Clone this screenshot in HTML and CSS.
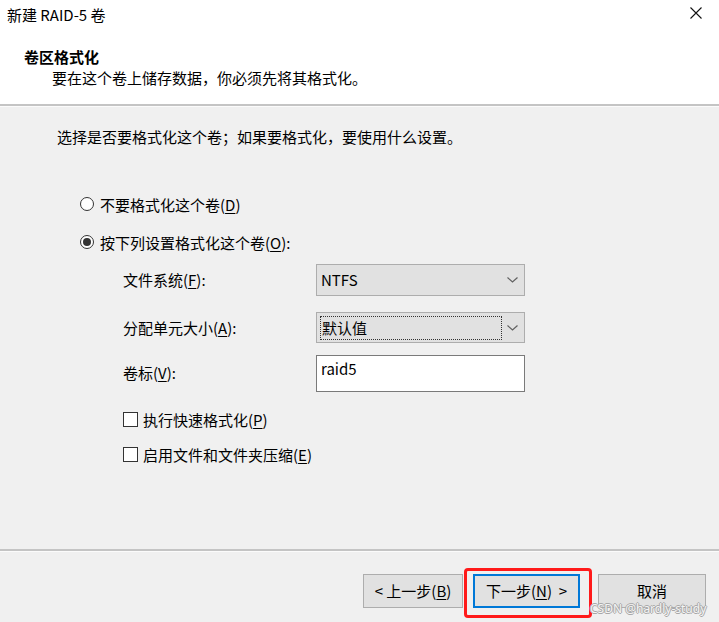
FILE: index.html
```html
<!DOCTYPE html>
<html lang="zh-CN">
<head>
<meta charset="utf-8">
<title>新建 RAID-5 卷</title>
<link rel="stylesheet" href="styles.css">
</head>
<body>
<div class="window">
  <div class="top">
    <div class="titlebar">
      <span class="title">新建 RAID-5 卷</span>
      <svg class="close" width="12" height="12" viewBox="0 0 12 12"><path d="M0.5 0.5 L11.5 11.5 M11.5 0.5 L0.5 11.5" stroke="#111" stroke-width="1.1" fill="none"/></svg>
    </div>
    <div class="header">
      <div class="h-title">卷区格式化</div>
      <div class="h-sub">要在这个卷上储存数据，你必须先将其格式化。</div>
    </div>
  </div>
  <div class="sep"></div>
  <div class="content">
    <div class="intro">选择是否要格式化这个卷；如果要格式化，要使用什么设置。</div>
    <div class="radio-row r1"><span class="radio"></span><span>不要格式化这个卷(<u>D</u>)</span></div>
    <div class="radio-row r2"><span class="radio checked"></span><span>按下列设置格式化这个卷(<u>O</u>):</span></div>
    <div class="form">
      <div class="frow f1">
        <span class="label">文件系统(<u>F</u>):</span>
        <div class="combo"><span class="ctext">NTFS</span><svg class="chev" width="11" height="6" viewBox="0 0 11 6"><path d="M0.5 0.5 L5.5 5 L10.5 0.5" stroke="#606060" stroke-width="1.2" fill="none"/></svg></div>
      </div>
      <div class="frow f2">
        <span class="label">分配单元大小(<u>A</u>):</span>
        <div class="combo"><span class="ctext focus">默认值</span><svg class="chev" width="11" height="6" viewBox="0 0 11 6"><path d="M0.5 0.5 L5.5 5 L10.5 0.5" stroke="#606060" stroke-width="1.2" fill="none"/></svg></div>
      </div>
      <div class="frow f3">
        <span class="label">卷标(<u>V</u>):</span>
        <div class="textbox">raid5</div>
      </div>
    </div>
    <div class="check-row c1"><span class="check"></span><span>执行快速格式化(<u>P</u>)</span></div>
    <div class="check-row c2"><span class="check"></span><span>启用文件和文件夹压缩(<u>E</u>)</span></div>
  </div>
  <div class="sep"></div>
  <div class="footer">
    <div class="btn back">&lt; 上一步(<u>B</u>)</div>
    <div class="btn next">下一步(<u>N</u>)&nbsp;&nbsp;&gt;</div>
    <div class="btn cancel">取消</div>
  </div>
  <div class="annot"></div>
  <div class="watermark">CSDN @hardly-study</div>
</div>
</body>
</html>
```

FILE: styles.css
```css
* { box-sizing: border-box; }
html, body { margin: 0; padding: 0; }
body {
  width: 719px;
  height: 622px;
  overflow: hidden;
  background: #f0f0f0;
  font-family: "Noto Sans CJK SC", "Noto Sans", sans-serif;
  font-size: 15px;
  color: #000;
}
u { text-decoration: underline; text-underline-offset: 2px; text-decoration-thickness: 1px; }
.window { position: relative; width: 719px; height: 622px; display: flex; flex-direction: column; }
.top { background: #fff; height: 104px; }
.titlebar {
  height: 30px;
  display: flex;
  align-items: center;
  justify-content: space-between;
  padding-left: 7px;
  padding-right: 17px;
}
.title { line-height: 20px; }
.close { margin-top: -4px; }
.header { padding-left: 24px; padding-top: 17px; }
.h-title { font-weight: bold; line-height: 20px; }
.h-sub { line-height: 20px; margin-left: 28px; margin-top: 1px; }
.sep { height: 3px; border-top: 2px solid #c4c4c4; background: #fbfbfb; flex: none; }
.content { height: 442px; padding-left: 57px; padding-top: 20px; flex: none; }
.intro { line-height: 20px; }
.radio-row, .check-row { display: flex; align-items: center; height: 20px; }
.radio-row { margin-left: 23px; gap: 6px; }
.r1 { margin-top: 47px; }
.r2 { margin-top: 18px; }
.radio {
  width: 14px; height: 14px;
  border: 1px solid #333;
  border-radius: 50%;
  background: #fff;
  display: flex; align-items: center; justify-content: center;
}
.radio.checked::after {
  content: "";
  width: 8px; height: 8px;
  border-radius: 50%;
  background: #333;
}
.form { margin-left: 66px; margin-top: 12px; }
.frow { display: flex; align-items: center; }
.label { width: 193px; line-height: 20px; }
.f2 { margin-top: 16px; }
.f3 { margin-top: 12px; align-items: flex-start; }
.f3 .label { padding-top: 8px; }
.combo {
  width: 209px; height: 32px;
  background: #e1e1e1;
  border: 1px solid #adadad;
  display: flex; align-items: center; justify-content: space-between;
  padding: 0 5px 0 3px;
}
.f2 .combo { height: 31px; }
.ctext { line-height: 22px; padding: 0 1px; }
.ctext.focus {
  width: 182px;
  height: 24px;
  border: 1px dotted #333;
  line-height: 22px;
}
.chev { margin-right: 1px; }
.textbox {
  width: 209px; height: 37px;
  background: #fff;
  border: 1px solid #7a7a7a;
  padding: 3px 0 0 4px;
  line-height: 20px;
}
.check-row { margin-left: 66px; gap: 5px; }
.c1 { margin-top: 17px; }
.c2 { margin-top: 15px; }
.check {
  width: 15px; height: 15px;
  border: 1px solid #333;
  background: #fff;
}
.footer {
  flex: 1;
  display: flex;
  justify-content: flex-end;
  align-items: flex-start;
  padding-top: 22px;
  padding-right: 13px;
}
.btn {
  height: 34px;
  background: #e1e1e1;
  border: 1px solid #adadad;
  display: flex; align-items: center; justify-content: center;
  line-height: 20px;
}
.back { width: 100px; }
.next { width: 107px; margin-left: 10px; border: 2px solid #0078d7; }
.cancel { width: 108px; margin-left: 18px; }
.annot {
  position: absolute;
  left: 464px; top: 568px;
  width: 128px; height: 50px;
  border: 3px solid #ff1a1a;
  border-radius: 4px;
}
.watermark {
  position: absolute;
  left: 590px; top: 600px;
  font-size: 12px;
  line-height: 18px;
  color: #f4f4f4;
  text-shadow: 1px 0 0 #a8a8a8, -1px 0 0 #a8a8a8, 0 1px 0 #a8a8a8, 0 -1px 0 #a8a8a8;
  font-family: "Noto Sans", sans-serif;
}
```
